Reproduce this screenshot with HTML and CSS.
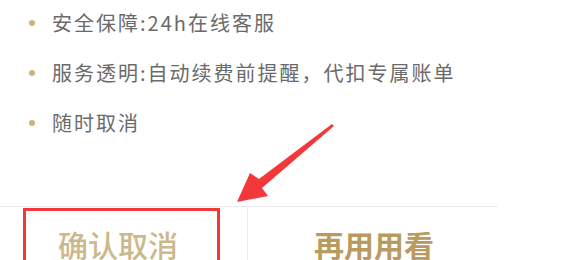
FILE: index.html
```html
<!DOCTYPE html>
<html lang="zh">
<head>
<meta charset="utf-8">
<link rel="stylesheet" href="styles.css">
</head>
<body>
<div class="page">
  <ul class="perks">
    <li class="perk"><span class="dot"></span><span class="perk-text">安全保障:24h在线客服</span></li>
    <li class="perk"><span class="dot"></span><span class="perk-text">服务透明:自动续费前提醒，代扣专属账单</span></li>
    <li class="perk"><span class="dot"></span><span class="perk-text">随时取消</span></li>
  </ul>
  <div class="actions">
    <div class="btn btn-cancel">确认取消<span class="mark-box"></span></div>
    <div class="btn btn-keep">再用用看</div>
  </div>
  <svg class="arrow" width="561" height="260" viewBox="0 0 561 260">
    <polygon points="332,124 259,179 250,173 237,202 268,196 262,188 334,126" fill="#f2383a"/>
  </svg>
</div>
</body>
</html>
```
FILE: styles.css
```css
html, body {
  margin: 0;
  padding: 0;
  background: #ffffff;
}
body {
  font-family: "Noto Sans CJK SC", "Noto Sans", sans-serif;
  width: 561px;
  height: 260px;
  overflow: hidden;
}
.page {
  position: relative;
  width: 561px;
  height: 260px;
  overflow: hidden;
}
.perks {
  list-style: none;
  margin: 0;
  padding: 0;
  display: flex;
  flex-direction: column;
  gap: 4px;
}
.perk {
  display: flex;
  align-items: center;
  height: 46px;
  padding-left: 29px;
}
.dot {
  width: 6px;
  height: 6px;
  border-radius: 50%;
  background: #d0b27c;
  margin-right: 17px;
  flex: none;
}
.perk-text {
  font-size: 20px;
  letter-spacing: 2px;
  color: #6a6a6a;
  line-height: 46px;
  white-space: nowrap;
}
.actions {
  margin-top: 60px;
  width: 498px;
  border-top: 1px solid #ececec;
  display: flex;
}
.btn {
  height: 53px;
  box-sizing: border-box;
  padding-top: 22px;
  font-size: 30px;
  line-height: 30px;
  white-space: nowrap;
}
.btn-cancel {
  position: relative;
  width: 248px;
  border-right: 1px solid #ececec;
  padding-left: 58px;
  color: #cbb98c;
  font-weight: 500;
}
.btn-keep {
  flex: 1;
  padding-left: 66px;
  color: #b99a5f;
  font-weight: 600;
}
.mark-box {
  position: absolute;
  left: 23px;
  top: 1px;
  width: 197px;
  height: 52px;
  box-sizing: border-box;
  border: 3px solid #f2383a;
  border-bottom: none;
}
.arrow {
  position: absolute;
  left: 0;
  top: 0;
  pointer-events: none;
}
```
